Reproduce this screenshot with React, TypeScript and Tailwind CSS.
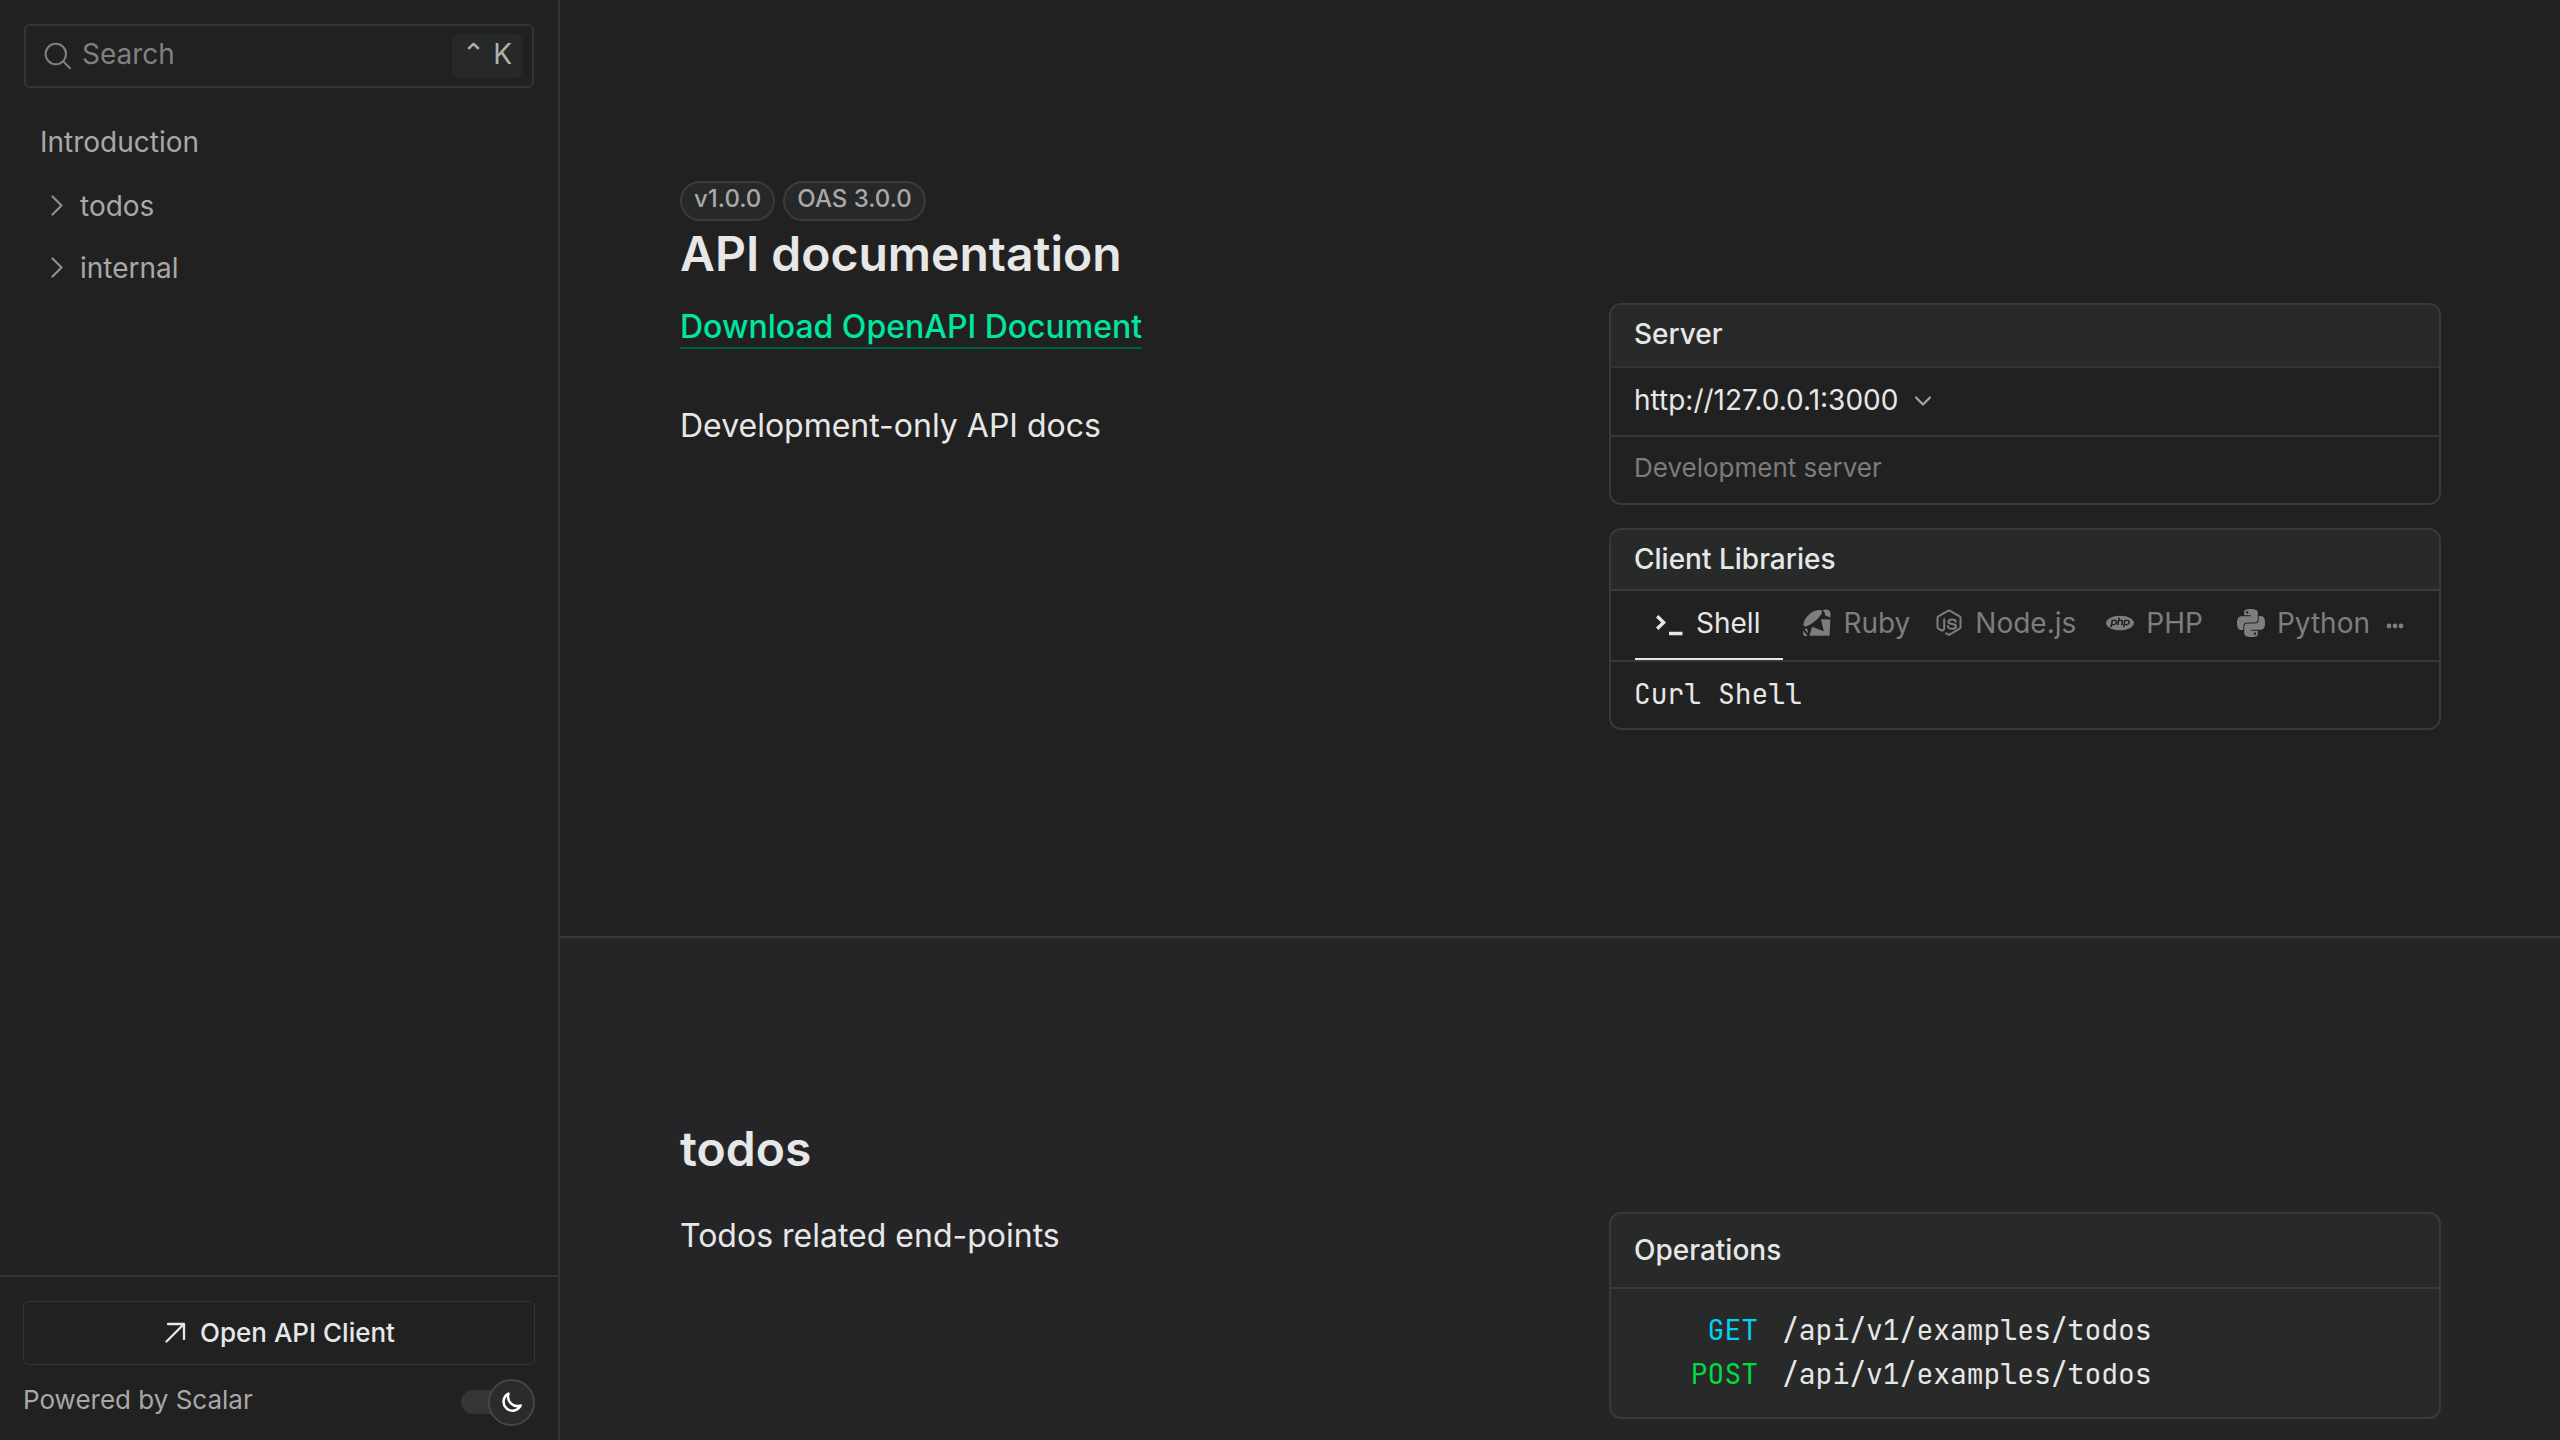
import type { ReactNode } from "react";
import { SiPhp, SiPython } from "react-icons/si";

function SearchIcon() {
  return (
    <svg className="size-7 shrink-0" viewBox="0 0 28 28" fill="none" stroke="currentColor" strokeWidth="2" strokeLinecap="round" aria-hidden="true">
      <circle cx="11.8" cy="12" r="10.2" />
      <path d="M19.2 19.4 26 26.2" />
    </svg>
  );
}

function ChevronRight() {
  return (
    <svg className="size-6 shrink-0 text-[#8f8f8f]" viewBox="0 0 24 24" fill="none" stroke="currentColor" strokeWidth="2.2" strokeLinecap="round" strokeLinejoin="round" aria-hidden="true">
      <path d="m7.5 2.500 9 9-9 9" />
    </svg>
  );
}

function ChevronDown() {
  return (
    <svg className="size-5 shrink-0 text-[#a4a4a4]" viewBox="0 0 20 20" fill="none" stroke="currentColor" strokeWidth="2.2" strokeLinecap="round" strokeLinejoin="round" aria-hidden="true">
      <path d="m3 7.500 7 7 7-7" />
    </svg>
  );
}

function ArrowUpRight() {
  return (
    <svg className="size-6 shrink-0" viewBox="0 0 24 24" fill="none" stroke="currentColor" strokeWidth="2.3" strokeLinecap="round" strokeLinejoin="round" aria-hidden="true">
      <path d="M5 3h16v15M21 3 3.500 20.500" />
    </svg>
  );
}

function MoonIcon() {
  return (
    <svg className="size-6" viewBox="0 0 24 24" fill="none" stroke="currentColor" strokeWidth="2.5" strokeLinejoin="round" aria-hidden="true">
      <path d="M8.500 3.600A9 9 0 1 0 20.700 15.500 9.500 9.500 0 0 1 8.500 3.600Z" />
    </svg>
  );
}

function ShellIcon() {
  return (
    <svg className="size-7 shrink-0" viewBox="0 0 28 28" fill="none" stroke="currentColor" strokeWidth="3.400" aria-hidden="true">
      <path d="m2.200 7.200 6.400 6.300-6.400 6.300" />
      <path d="M14 24.500h13.500" />
    </svg>
  );
}

function RubyIcon() {
  return (
    <svg className="size-7 shrink-0" viewBox="0 0 28 28" fill="currentColor" aria-hidden="true">
      <path d="M17 1c3 .1 2.600 3-.6 6.800-3.600 4.400-9.800 9.200-13.700 9.600C-.5 17.700 0 14.200 2.300 10 5.300 4.600 11.600.7 17 1Z" />
      <path d="M19.500 1.300c3.400-1.400 8-.9 8 3.900v3.200l-5.300-1.800c.1-2-.9-4-2.700-5.300Z" />
      <path d="m18 10.200 9.300.2-.7 16.300H6.500L9 17.800l11.800 4.500L18 10.200Z" />
      <path d="M.2 21.500 4.600 27H1.800C.6 27 .2 26 .2 24.500v-3ZM1.300 20l2.900-.6 1 5.200L1.300 20Z" />
    </svg>
  );
}

function NodeIcon() {
  return (
    <svg className="size-7 shrink-0" viewBox="0 0 28 28" fill="none" stroke="currentColor" strokeWidth="2" strokeLinejoin="round" strokeLinecap="round" aria-hidden="true">
      <path d="M9.200 10.300v8.900c0 2.200-1.600 2.700-3.400 1.800L3.300 19.700c-.6-.4-.8-.8-.8-1.400V8.700c0-.6.300-1.100.8-1.400L13 1.800c.6-.4 1.400-.4 2 0l9.700 5.500c.5.300.8.800.8 1.400v9.600c0 .6-.3 1.100-.8 1.400L15 25.300c-.6.400-1.400.4-2 0l-1.800-1" />
      <path d="M20.800 12.800c-.2-1.800-1.500-2.300-3.800-2.300-2.200 0-3.600.8-3.600 2.300 0 1.700 1.400 2 3.700 2.300 2.700.3 3.900.8 3.900 2.300 0 1.700-1.500 2.400-4 2.400-2.700 0-4-.9-4.100-2.800" />
    </svg>
  );
}

function Card({ children, className = "" }: { children: ReactNode; className?: string }) {
  return <section className={`overflow-hidden rounded-xl border-2 border-[#38393a] ${className}`}>{children}</section>;
}

const inactiveTab = "flex items-center gap-3 pb-1.5";

function NavGroup({ label }: { label: string }) {
  return (
    <li>
      <button type="button" className="flex h-[62px] w-full items-center gap-[11px] pl-[5px]">
        <ChevronRight />
        {label}
      </button>
    </li>
  );
}

function Operation({ method, color }: { method: string; color: string }) {
  return (
    <li>
      <a href="#todos" className="flex h-11 items-center gap-6">
        <span className={`w-[123px] text-right ${color}`}>{method}</span>
        <span>/api/v1/examples/todos</span>
      </a>
    </li>
  );
}

export default function App() {
  return (
    <div className="flex min-h-screen bg-[#212121] font-['Inter',sans-serif] text-[28px] leading-10 text-[#e7e7e7]">
      <aside className="sticky top-0 flex h-screen w-[560px] shrink-0 flex-col border-r-2 border-[#323234] text-[#a8a8a8]">
        <div className="p-6 pb-0">
          <label className="flex h-16 items-center gap-2.5 rounded-md border-2 border-[#353537] pr-2.5 pl-[18px] text-[#808080]">
            <SearchIcon />
            <input type="text" aria-label="Search" placeholder="Search" className="min-w-0 flex-1 bg-transparent pb-1 outline-none placeholder:text-[#808080]" />
            <kbd className="flex h-11 items-center gap-2 rounded-md bg-[#272929] px-2.5 pb-1 font-['Inter',sans-serif] text-[#b0b0b0]">
              <span className="font-['DejaVu_Sans',sans-serif]">⌃</span>
              <span>K</span>
            </kbd>
          </label>
        </div>
        <nav className="flex-1 px-10 pt-[23px]">
          <ul>
            <li className="mb-0.5">
              <a href="#introduction" className="flex h-[62px] items-center">Introduction</a>
            </li>
            <NavGroup label="todos" />
            <NavGroup label="internal" />
          </ul>
        </nav>
        <div className="border-t-2 border-[#353537] px-[23px] pt-6 pb-4 text-[26px]">
          <button type="button" className="flex h-16 w-full items-center justify-center gap-[13px] rounded-md border border-[#353537] font-medium text-[#e7e7e7]">
            <ArrowUpRight />
            Open API Client
          </button>
          <div className="mt-[15px] flex items-center justify-between">
            <a href="#scalar" className="pb-1">Powered by Scalar</a>
            <button type="button" role="switch" aria-checked="true" aria-label="Toggle dark mode" className="flex h-6 w-[74px] items-center justify-end rounded-full bg-[#353538] text-white">
              <span className="flex size-[47px] shrink-0 items-center justify-center rounded-full border-2 border-[#464648] bg-[#2b2b2e]">
                <MoonIcon />
              </span>
            </button>
          </div>
        </div>
      </aside>

      <main className="flex min-w-0 flex-1 flex-col">
        <section id="introduction" className="border-b-2 border-[#3a3a3c] pt-[181px] pr-[119px] pb-[206px] pl-[120px]">
          <div className="flex gap-2 text-2xl font-medium text-[#a8a8a8]">
            <span className="flex h-10 items-center rounded-full border-2 border-[#3a3c3c] bg-[#272929] px-3 pb-1">v1.0.0</span>
            <span className="flex h-10 items-center rounded-full border-2 border-[#3a3c3c] bg-[#272929] px-3 pb-1">OAS 3.0.0</span>
          </div>
          <h1 className="pt-px text-5xl leading-16 font-semibold">API documentation</h1>
          <div className="mt-[17px] grid grid-cols-2 gap-[97px]">
            <div className="text-[32px] leading-12">
              <p>
                <a href="#download" className="border-b-2 border-[#00624b] pb-px font-medium text-[#00e5a0]">Download OpenAPI Document</a>
              </p>
              <p className="mt-[51px]">Development-only API docs</p>
            </div>
            <div className="flex flex-col gap-[23px]">
              <Card>
                <h2 className="flex h-[63px] items-center border-b-2 border-[#343636] bg-[#282a2a] px-[23px] pb-1 font-medium">Server</h2>
                <button type="button" className="flex h-[69px] w-full items-center gap-[15px] border-b-2 border-[#363838] px-[23px] pb-1">
                  http://127.0.0.1:3000
                  <ChevronDown />
                </button>
                <p className="flex h-[66px] items-center px-[23px] pb-1 text-[26px] text-[#7c7c7c]">Development server</p>
              </Card>
              <Card>
                <h2 className="flex h-[61px] items-center border-b-2 border-[#3a3c3c] bg-[#282a2a] px-[23px] pb-0.5 font-medium">Client Libraries</h2>
                <div role="tablist" aria-label="Client Libraries" className="flex h-[71px] items-stretch border-b-2 border-[#363838] px-6 text-[#7e7e7e]">
                  <button type="button" role="tab" aria-selected="true" className="flex items-center gap-[13px] border-b-2 border-[#e7e7e7] pt-0.5 pr-[23px] pb-1.5 pl-5 text-[#e7e7e7]">
                    <ShellIcon />
                    Shell
                  </button>
                  <button type="button" role="tab" aria-selected="false" className={`ml-5 ${inactiveTab}`}>
                    <RubyIcon />
                    Ruby
                  </button>
                  <button type="button" role="tab" aria-selected="false" className={`ml-[25px] ${inactiveTab}`}>
                    <NodeIcon />
                    Node.js
                  </button>
                  <button type="button" role="tab" aria-selected="false" className={`ml-[30px] ${inactiveTab}`}>
                    <SiPhp className="size-7 shrink-0" />
                    PHP
                  </button>
                  <button type="button" role="tab" aria-selected="false" className={`ml-[34px] ${inactiveTab}`}>
                    <SiPython className="size-7 shrink-0" />
                    Python
                  </button>
                  <button type="button" aria-label="More libraries" className="ml-[15px] flex items-center">
                    <svg className="size-5" viewBox="0 0 20 20" fill="currentColor" aria-hidden="true">
                      <circle cx="4" cy="10" r="2.400" />
                      <circle cx="10" cy="10" r="2.400" />
                      <circle cx="16" cy="10" r="2.400" />
                    </svg>
                  </button>
                </div>
                <p className="flex h-[66px] items-center px-[23px] pb-0.5 font-['JetBrains_Mono','DejaVu_Sans_Mono',monospace]">Curl Shell</p>
              </Card>
            </div>
          </div>
        </section>

        <section id="todos" className="flex-1 bg-[#252527] pt-[179px] pr-[119px] pb-5 pl-[120px]">
          <h1 className="text-5xl leading-16 font-semibold">todos</h1>
          <div className="mt-[31px] grid grid-cols-2 gap-[97px]">
            <p className="text-[32px] leading-12">Todos related end-points</p>
            <Card className="bg-[#282a2a]">
              <h2 className="flex h-[75px] items-center border-b-2 border-[#3a3c3c] px-[23px] pb-0.5 font-medium">Operations</h2>
              <ul className="px-6 pt-[19px] pb-[21px] font-['JetBrains_Mono','DejaVu_Sans_Mono',monospace]">
                <Operation method="GET" color="text-[#00d4f2]" />
                <Operation method="POST" color="text-[#00dc43]" />
              </ul>
            </Card>
          </div>
        </section>
      </main>
    </div>
  );
}
